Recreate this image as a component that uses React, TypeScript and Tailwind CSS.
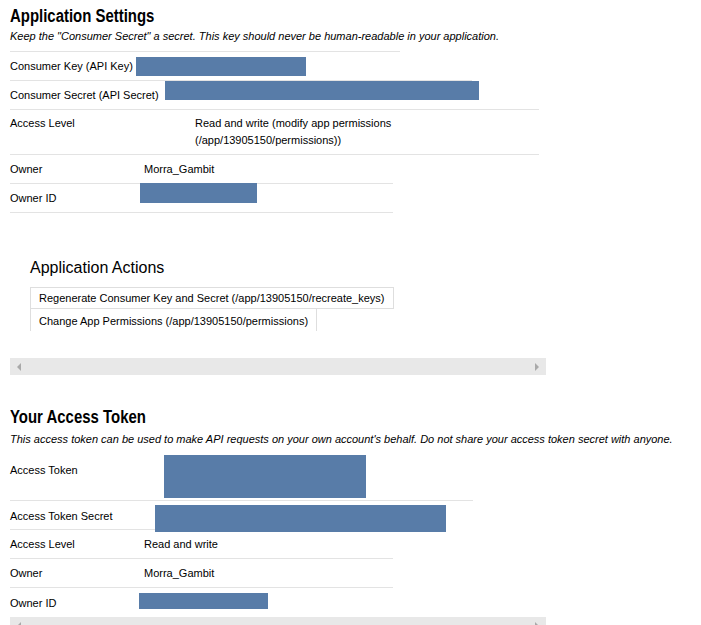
import React from 'react';

const Redacted = ({ className }: { className: string }) => (
    <div className={`relative bg-[#587ca8] ${className}`} />
);

function Scrollbar({ className }: { className: string }) {
    return (
        <div className={`flex h-[17px] w-[536px] items-center justify-between bg-[#e8e8e8] px-[7px] ${className}`}>
            <svg width="5" height="8" viewBox="0 0 5 8">
                <polygon points="4,0 4,8 0,4" fill="#a9a9a9" />
            </svg>
            <svg width="5" height="8" viewBox="0 0 5 8">
                <polygon points="1,0 1,8 5,4" fill="#a9a9a9" />
            </svg>
        </div>
    );
}

// condensed bold heading (Helvetica Neue Condensed look)
const Heading = ({ children, className }: { children: React.ReactNode; className: string }) => (
    <h1 className={`text-[18px] leading-[22px] font-bold ${className}`}>
        <span className="inline-block origin-left scale-x-[0.83]">{children}</span>
    </h1>
);

export default function App() {
    return (
        <div className="min-h-[625px] bg-white pl-[10px] pt-[5px] font-['Liberation_Sans',Arial,sans-serif] text-[11px] leading-[14px] text-black">
            {/* Application settings */}
            <Heading className="">Application Settings</Heading>
            <p className="mt-[2px] italic">
                Keep the "Consumer Secret" a secret. This key should never be human-readable in your application.
            </p>

            <div className="mt-[8px]">
                <div className="flex h-[29px] w-[390px] border-t border-[#e3e3e3]">
                    <div className="w-[126px] shrink-0 pt-[7px]">Consumer Key (API Key)</div>
                    <Redacted className="mt-[5px] h-[19px] w-[170px] shrink-0" />
                </div>
                <div className="flex h-[29px] w-[462px] border-t border-[#e3e3e3]">
                    <div className="w-[155px] shrink-0 pt-[7px]">Consumer Secret (API Secret)</div>
                    <Redacted className="h-[19px] w-[314px] shrink-0" />
                </div>
                <div className="flex h-[45px] w-[529px] border-t border-[#e3e3e3]">
                    <div className="w-[185px] shrink-0 pt-[6px]">Access Level</div>
                    <div className="pt-[5px] leading-[17px]">
                        Read and write (modify app permissions
                        <br />
                        (/app/13905150/permissions))
                    </div>
                </div>
                <div className="flex h-[29px] w-[529px] border-t border-[#e3e3e3]">
                    <div className="w-[134px] shrink-0 pt-[7px]">Owner</div>
                    <div className="pt-[7px]">Morra_Gambit</div>
                </div>
                <div className="flex h-[30px] w-[383px] border-y border-[#e3e3e3]">
                    <div className="w-[130px] shrink-0 pt-[7px]">Owner ID</div>
                    <Redacted className="-mt-px h-[20px] w-[117px] shrink-0" />
                </div>
            </div>

            {/* Application actions */}
            <div className="pl-[20px]">
                <h2 className="mt-[45px] text-[16px] leading-[20px]">Application Actions</h2>
                <div className="mt-[9px] flex flex-col items-start">
                    <div className="border border-[#dedede] px-[8px] pt-[3px] pb-[3px]">
                        Regenerate Consumer Key and Secret (/app/13905150/recreate_keys)
                    </div>
                    <div className="-mt-px border-x border-t border-[#dedede] px-[8px] pt-[5px] pb-[3px]">
                        Change App Permissions (/app/13905150/permissions)
                    </div>
                </div>
            </div>

            <Scrollbar className="mt-[27px]" />

            {/* Access token */}
            <Heading className="mt-[31px]">Your Access Token</Heading>
            <p className="mt-[4px] italic">
                This access token can be used to make API requests on your own account's behalf. Do not share your access token secret with anyone.
            </p>

            <div>
                <div className="flex h-[54px] w-[463px]">
                    <div className="w-[154px] shrink-0 pt-[17px]">Access Token</div>
                    <Redacted className="mt-[9px] h-[43px] w-[202px] shrink-0" />
                </div>
                <div className="flex h-[29px] w-[463px] border-t border-[#e3e3e3]">
                    <div className="w-[145px] shrink-0 pt-[8px]">Access Token Secret</div>
                    <Redacted className="mt-[4px] h-[27px] w-[291px] shrink-0" />
                </div>
                <div className="flex h-[29px] w-[436px] border-t border-[#e3e3e3]">
                    <div className="w-[134px] shrink-0 pt-[7px]">Access Level</div>
                    <div className="pt-[7px]">Read and write</div>
                </div>
                <div className="flex h-[29px] w-[383px] border-t border-[#e3e3e3]">
                    <div className="w-[134px] shrink-0 pt-[7px]">Owner</div>
                    <div className="pt-[7px]">Morra_Gambit</div>
                </div>
                <div className="flex h-[30px] w-[383px] border-t border-[#e3e3e3]">
                    <div className="w-[129px] shrink-0 pt-[8px]">Owner ID</div>
                    <Redacted className="mt-[5px] h-[16px] w-[129px] shrink-0" />
                </div>
            </div>

            <Scrollbar className="" />
        </div>
    );
}
